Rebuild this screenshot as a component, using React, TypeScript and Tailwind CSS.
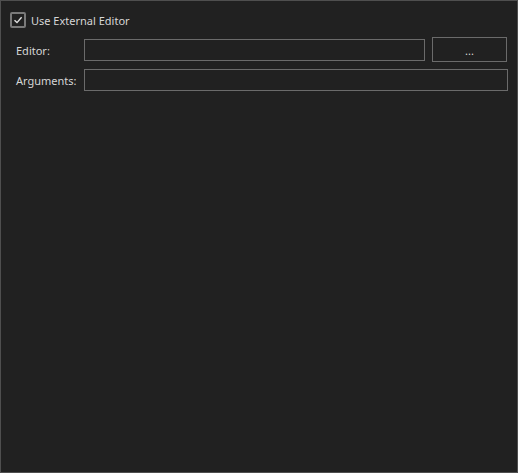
export default function App() {
  return (
    <div
      className="w-[518px] h-[473px] border border-[#4f4f4f] bg-[#212121] text-[#d6d6d6] text-[11px] pl-[9px] pt-[11px]"
      style={{ fontFamily: '"Noto Sans", "Open Sans", sans-serif' }}
    >
      {/* Use external editor checkbox */}
      <label className="flex items-center h-4 gap-[5px]">
        <span className="w-4 h-4 border-2 border-[#7a7a7a] rounded-[2px] flex items-center justify-center">
          <svg width="10" height="10" viewBox="0 0 10 10" fill="none">
            <path d="M1.5 5.2 L4 7.6 L8.6 2.2" stroke="#e0e0e0" strokeWidth="1.4" />
          </svg>
        </span>
        <span className="pt-[2px]">Use External Editor</span>
      </label>

      {/* Editor row */}
      <div className="flex items-center mt-[9px] pl-[6px] pr-[10px] h-[25px]">
        <span className="w-[68px] pt-[3px]">Editor:</span>
        <div className="flex-1 h-[22px] border border-[#6b6b6b]" />
        <button className="ml-[7px] w-[75px] h-[25px] border border-[#6b6b6b] flex items-center justify-center text-[#d6d6d6] pt-[3px]">
          ...
        </button>
      </div>

      {/* Arguments row */}
      <div className="flex items-center mt-[7px] pl-[6px] pr-[9px] h-[22px]">
        <span className="w-[68px] pt-[3px]">Arguments:</span>
        <div className="flex-1 h-[22px] border border-[#6b6b6b]" />
      </div>
    </div>
  )
}
